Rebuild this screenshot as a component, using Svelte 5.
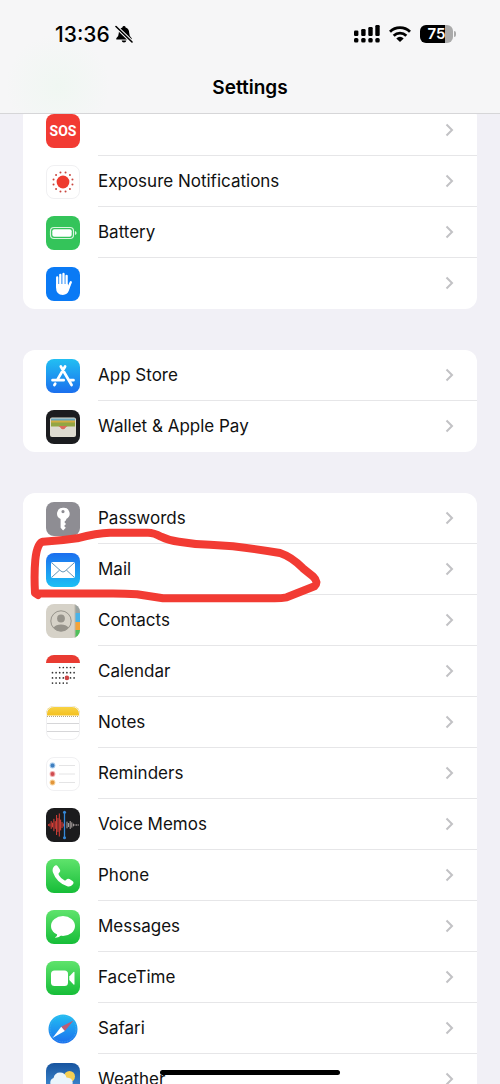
<script lang="ts">
  interface Item {
    icon: string;
    label?: string;
    hint?: string;
    marked?: boolean;
  }

  const groups: Item[][] = [
    [
      { icon: "sos", hint: "SOS" },
      { icon: "exposure", label: "Exposure Notifications" },
      { icon: "battery", label: "Battery" },
      { icon: "hand", hint: "Hand" },
    ],
    [
      { icon: "appstore", label: "App Store" },
      { icon: "wallet", label: "Wallet & Apple Pay" },
    ],
    [
      { icon: "passwords", label: "Passwords" },
      { icon: "mail", label: "Mail", marked: true },
      { icon: "contacts", label: "Contacts" },
      { icon: "calendar", label: "Calendar" },
      { icon: "notes", label: "Notes" },
      { icon: "reminders", label: "Reminders" },
      { icon: "voice", label: "Voice Memos" },
      { icon: "phone", label: "Phone" },
      { icon: "messages", label: "Messages" },
      { icon: "facetime", label: "FaceTime" },
      { icon: "safari", label: "Safari" },
      { icon: "weather", label: "Weather" },
    ],
  ];

  const backgrounds: Record<string, string> = {
    sos: "#f23b33",
    exposure: "#fff",
    battery: "#34c45a",
    hand: "#0a7af5",
    appstore: "url(#sky)",
    wallet: "#1b1c1f",
    passwords: "#8e8d93",
    mail: "url(#mailblue)",
    contacts: "#d6d2c8",
    calendar: "#fff",
    notes: "#fff",
    reminders: "#fff",
    voice: "#1b1b1d",
    phone: "url(#green)",
    messages: "url(#green)",
    facetime: "url(#green)",
    safari: "#fff",
    weather: "url(#weatherblue)",
  };

  const outlined = ["exposure", "notes", "reminders"];

  const rays = Array.from({ length: 12 }, (_, i) => {
    const a = (i * Math.PI) / 6 + Math.PI / 12;
    return { x: 17 + 9.8 * Math.cos(a), y: 17 + 9.8 * Math.sin(a) };
  });

  // [first column, last column] of the days in each week
  const weeks = [[2, 6], [0, 6], [0, 6], [0, 4]];
  const days = weeks.flatMap(([from, to], row) =>
    Array.from({ length: to - from + 1 }, (_, i) => ({ x: 6.5 + (from + i) * 3.6, y: 12.5 + row * 5.2 }))
  );

  const wave = [1, 2, 5, 3, 8, 5, 13, 9, 15, 7, 4, 2];
  const tail = [5, 3, 6, 4, 2, 1, 1, 1];
</script>

<svg class="defs" width="0" height="0" aria-hidden="true">
  <defs>
    <linearGradient id="sky" x2="0" y2="1">
      <stop offset="0" stop-color="#22bff2" />
      <stop offset="1" stop-color="#1b6fee" />
    </linearGradient>
    <linearGradient id="mailblue" x2="0" y2="1">
      <stop offset="0" stop-color="#1c6fef" />
      <stop offset="1" stop-color="#1cc0f4" />
    </linearGradient>
    <linearGradient id="green" x2="0" y2="1">
      <stop offset="0" stop-color="#5fe36c" />
      <stop offset="1" stop-color="#16bd38" />
    </linearGradient>
    <linearGradient id="weatherblue" x2="0" y2="1">
      <stop offset="0" stop-color="#17549f" />
      <stop offset="1" stop-color="#4a9be0" />
    </linearGradient>
    <linearGradient id="yellow" x2="0" y2="1">
      <stop offset="0" stop-color="#f9d548" />
      <stop offset="1" stop-color="#f4c01f" />
    </linearGradient>
    <clipPath id="tile"><rect width="34" height="34" rx="8" /></clipPath>
  </defs>
</svg>

{#snippet appIcon(name: string)}
  <svg class="icon" viewBox="0 0 34 34" aria-hidden="true">
    <g clip-path="url(#tile)">
      <rect width="34" height="34" fill={backgrounds[name]} />
      {#if name === "sos"}
        <text x="17" y="22" text-anchor="middle" class="sos">SOS</text>
      {:else if name === "exposure"}
        <circle cx="17" cy="17" r="6.4" fill="#ee3b2f" />
        {#each rays as ray}
          <circle cx={ray.x} cy={ray.y} r="1" fill="#c9473f" />
        {/each}
      {:else if name === "battery"}
        <rect x="4.5" y="11.5" width="23" height="11" rx="3.5" fill="none" stroke="#d9f5df" stroke-width="1.2" />
        <rect x="6.3" y="13.3" width="19.4" height="7.4" rx="2" fill="#fff" />
        <path d="M29 15v4q1.6-.6 1.6-2t-1.6-2z" fill="#d9f5df" />
      {:else if name === "hand"}
        <g fill="none" stroke="#fff" stroke-width="2.3" stroke-linecap="round">
          <path d="M11.2 10.5v9M14.3 7.800v10M17.5 7v10M20.6 8.800v9M24.800 15.300l-2.500 5.500" />
        </g>
        <path d="M10 17h11.800l.3 2.200 2.500-1-1.700 5.300q-1.600 4.400-6 4.400-6.900 0-6.900-7.600z" fill="#fff" />
      {:else if name === "appstore"}
        <g fill="none" stroke="#fff" stroke-width="2.7" stroke-linecap="round">
          <path d="M14.800 7.500 25.600 26M19.100 7.500 11.300 20.900M9.200 24.700l-.8 1.300M6.500 21.200h11.200M23.500 21.200h4" />
        </g>
      {:else if name === "wallet"}
        <rect x="4" y="7.500" width="26" height="19.500" rx="2" fill="#e0ddd0" />
        <path d="M5 8.500h24v3H5z" fill="#67a6bd" />
        <path d="M5 10.500h24v3H5z" fill="#d3ad42" />
        <path d="M5 12.500h24v4.500H5z" fill="#93a643" />
        <path d="M12 16h10q-1.500 0-2.300 1.800-1 1.800-2.700 1.800t-2.700-1.800Q13.500 16 12 16z" fill="#dc6b5c" />
        <path d="M5 16.500h7.500q1.300 0 2 1.500.9 1.800 2.500 1.800t2.500-1.800q.7-1.500 2-1.500H29V26H5z" fill="#dedbd0" />
      {:else if name === "passwords"}
        <path
          d="M17 5.700a5.900 5.900 0 0 0-2.400 11.300v8.800l2.500 2.700 2.700-2.700-1.700-1.900 1.900-2-1.700-1.800 1.900-2.200v-1A5.900 5.900 0 0 0 17 5.700zm0 2.300a1.600 1.600 0 1 1 0 3.200 1.600 1.600 0 0 1 0-3.200z"
          fill="#fff"
          fill-rule="evenodd"
        />
      {:else if name === "mail"}
        <rect x="5" y="9" width="24" height="16" rx="2" fill="#fff" />
        <path d="m6 10 9 8.200q2 1.600 4 0l9-8.200M6 24l7.700-7M28 24l-7.700-7" fill="none" stroke="#6496b7" />
      {:else if name === "contacts"}
        <path d="M29 0h5v9h-5z" fill="#9aa2a0" />
        <path d="M29 9h5v9h-5z" fill="#49b3e9" />
        <path d="M29 18h5v8h-5z" fill="#f3a43b" />
        <path d="M29 26h5v8h-5z" fill="#4fc05a" />
        <path d="M28.500 0h1v34h-1z" fill="#bbb6aa" />
        <circle cx="15" cy="17" r="10.200" fill="none" stroke="#96938b" />
        <circle cx="15" cy="14.500" r="3.900" fill="#96938b" />
        <path d="M7.500 23.500q2.500-3 7.500-3t7.500 3q-2.500 3.700-7.500 3.700t-7.500-3.700z" fill="#96938b" />
      {:else if name === "calendar"}
        <path d="M0 0h34v8H0z" fill="#e93b32" />
        {#each days as day}
          <circle cx={day.x} cy={day.y} r="0.85" fill="#333" />
        {/each}
        <circle cx="20.900" cy="22.900" r="2.300" fill="#cf4546" />
      {:else if name === "notes"}
        <path d="M0 0h34v9.500H0z" fill="url(#yellow)" />
        <path d="M1 10.500h32" stroke="#b5a984" stroke-dasharray="1 1" />
        <path d="M0 17.500h34M0 25.500h34" stroke="#d6d6d8" />
      {:else if name === "reminders"}
        <circle cx="6.500" cy="8.500" r="2.900" fill="#a9cbea" />
        <circle cx="6.500" cy="17" r="2.900" fill="#f0adad" />
        <circle cx="6.500" cy="25.500" r="2.900" fill="#f6d29b" />
        <circle cx="6.500" cy="8.500" r="1.900" fill="#3f7fc0" />
        <circle cx="6.500" cy="17" r="1.900" fill="#cf4c50" />
        <circle cx="6.500" cy="25.500" r="1.900" fill="#e2953a" />
        <path d="M13 8.500h16M13 17h16M13 25.500h16" stroke="#e4e4e5" />
      {:else if name === "voice"}
        {#each wave as h, i}
          <path d="M{2.5 + i * 1.35} {17 - h / 1.3}v{h * 1.54}" stroke="#df4039" />
        {/each}
        {#each tail as h, i}
          <path d="M{21 + i * 1.6} {17 - h / 1.5}v{h * 1.33}" stroke="#b3aaa9" />
        {/each}
        <path d="M18.500 4v26" stroke="#3488d8" stroke-width="1.3" />
        <circle cx="18.500" cy="4.300" r="1.500" fill="#3488d8" />
        <circle cx="18.500" cy="29.700" r="1.500" fill="#3488d8" />
      {:else if name === "phone"}
        <path
          d="M8.200 7.200q2.100-1.900 3.700.3l2 3q1 1.700-.5 3-1.400 1-.6 2.400 2.200 3.700 5.500 5.400 1.300.6 2.200-.7 1.200-1.600 3-.5l3 2q2 1.500.2 3.500-2.200 2.500-5.500 1.600-10.700-3.500-14.400-14.200-.8-3.700 1.400-5.800z"
          fill="#fff"
        />
      {:else if name === "messages"}
        <ellipse cx="17" cy="16" rx="12" ry="10" fill="#fff" />
        <path d="M11.500 23q0 3-2.500 4.600 4 .3 6.500-2.600z" fill="#fff" />
      {:else if name === "facetime"}
        <rect x="5" y="9.500" width="17" height="15.500" rx="3.500" fill="#fff" />
        <path d="M23.300 15.500 27.500 11q1-.6 1 .5v11.500q0 1-1 .4l-4.200-4.400z" fill="#fff" />
      {:else if name === "safari"}
        <circle cx="17" cy="17" r="14.500" fill="url(#sky)" />
        <circle cx="17" cy="17" r="13" fill="none" stroke="#5fb8ee" stroke-width="0.8" stroke-dasharray="0.7 1" />
        <path d="m27.500 8.500-12.300 6.300 3.600 4.200z" fill="#bd5c75" />
        <path d="m6.500 26 8.700-11.200 3.600 4.200z" fill="#fff" />
      {:else if name === "weather"}
        <circle cx="23.500" cy="13.500" r="5.500" fill="#f5cf54" />
        <path d="M8 24.500a5 5 0 0 1-.5-9.500q1.300-5.500 6.500-5.500 5 0 6.500 5 6 .2 6.200 5 0 5-5.200 5z" fill="#eaf5fc" />
      {/if}
    </g>
    {#if outlined.includes(name)}
      <rect x="0.500" y="0.500" width="33" height="33" rx="7.500" fill="none" stroke="#f0f0f2" />
    {/if}
  </svg>
{/snippet}

<div class="screen">
  <header>
    <div class="status">
      <div class="clock">
        <time>13:36</time>
        <svg width="18" height="18" viewBox="0 0 18 18" aria-hidden="true">
          <path d="M9 1q1.500 0 1.600 1.400 3.600 1 3.600 5.600 0 3.300 2.500 5.200v1.200H1.300v-1.200Q3.800 11.300 3.800 8q0-4.600 3.600-5.600Q7.500 1 9 1zM6.600 15.400h4.800Q11 17.400 9 17.400t-2.400-2z" />
          <path d="M1 1.500 17 17" stroke="#f6f6f7" stroke-width="3.600" />
          <path d="M1 1.500 17 17" stroke="#000" stroke-width="1.600" stroke-linecap="round" />
        </svg>
      </div>
      <div class="indicators">
        <svg width="26" height="18" viewBox="0 0 26 18" aria-hidden="true">
          <rect y="5.500" width="4.400" height="5.500" rx="1.200" />
          <rect x="7.200" y="4" width="4.400" height="7" rx="1.200" />
          <rect x="14.300" y="2" width="4.400" height="9" rx="1.200" />
          <rect x="21.300" width="4.400" height="11" rx="1.200" />
          <rect y="13" width="4.400" height="4.400" rx="1.500" />
          <rect x="7.200" y="13" width="4.400" height="4.400" rx="1.500" />
          <rect x="14.300" y="13" width="4.400" height="4.400" rx="1.500" />
          <rect x="21.300" y="13" width="4.400" height="4.400" rx="1.500" />
        </svg>
        <svg width="22" height="16" viewBox="0 0 22 16" aria-hidden="true">
          <g fill="none" stroke="#000" stroke-width="2.8">
            <path d="M1 5.800a14.300 14.300 0 0 1 20 0" />
            <path d="M4.700 9.700a9 9 0 0 1 12.600 0" />
          </g>
          <path d="M7.300 12.400a5.200 5.200 0 0 1 7.400 0L11 16z" />
        </svg>
        <div class="level">
          <span>75</span>
        </div>
      </div>
    </div>
    <h1>Settings</h1>
  </header>

  <main>
    {#each groups as group}
      <ul>
        {#each group as item}
          <li>
            <a href="#{item.icon}" aria-label={item.label ?? item.hint}>
              {@render appIcon(item.icon)}
              <span class="body">
                <span>{item.label ?? ""}</span>
                <svg width="9" height="14" viewBox="0 0 9 14" aria-hidden="true">
                  <path d="m1.500 1.500 5.500 5.500-5.500 5.500" fill="none" stroke="#c2c2c5" stroke-width="2" />
                </svg>
              </span>
            </a>
            {#if item.marked}
              <svg class="marker" width="310" height="84" viewBox="0 0 310 84" aria-hidden="true">
                <path
                  d="M15 71 12 69Q11 50 12.300 36 14 19 20 17.700 36 17 54 14.300 74 9 87 8.700h38q6 0 13 4 8 4 18 5 16 2.800 31 3l23 1.600q26 3 47 6.700 12 4 23 15.300l10 8q6 6 1.500 10l-27.800 11q-5 1-12 1H140l-26-4q-12-.7-24-.7H15"
                />
              </svg>
            {/if}
          </li>
        {/each}
      </ul>
    {/each}
  </main>

  <div class="home"></div>
</div>

<style>
  :global(body) {
    margin: 0;
    background: #f1f0f6;
  }

  .defs {
    position: absolute;
  }

  .screen {
    position: relative;
    height: 100vh;
    overflow: hidden;
    background: #f1f0f6;
    color: #111;
    font-family: Inter, "Liberation Sans", sans-serif;
  }

  header {
    position: absolute;
    top: 0;
    left: 0;
    right: 0;
    z-index: 2;
    box-sizing: border-box;
    height: 114px;
    padding-top: 20px;
    border-bottom: 1px solid #d6d6d8;
    background: radial-gradient(circle at 58px 86px, #f0f7f2, #f6f6f7 52px);
    color: #000;
  }

  .status {
    display: flex;
    align-items: center;
    justify-content: space-between;
    height: 28px;
    padding: 0 47px 0 55px;
  }

  .clock {
    display: flex;
    align-items: center;
    gap: 5px;
    font-size: 21px;
    font-weight: 500;
  }

  .indicators {
    display: flex;
    align-items: center;
    gap: 9px;
  }

  .level {
    position: relative;
    width: 33px;
    height: 18px;
    border-radius: 6px;
    background: linear-gradient(90deg, #000 75%, #aaa 75%);
    color: #fff;
    font-size: 15px;
    font-weight: 600;
    line-height: 18px;
    text-align: center;
  }

  .level::after {
    content: "";
    position: absolute;
    top: 6px;
    right: -3px;
    width: 2px;
    height: 6px;
    border-radius: 0 2px 2px 0;
    background: #aaa;
  }

  h1 {
    margin: 28px 0 0;
    font-size: 19px;
    font-weight: 600;
    line-height: 24px;
    text-align: center;
  }

  main {
    display: flex;
    flex-direction: column;
    gap: 41px;
    padding: 105px 23px 0;
  }

  ul {
    margin: 0;
    padding: 0;
    border-radius: 12px;
    background: #fff;
    list-style: none;
  }

  li {
    position: relative;
  }

  a {
    display: flex;
    align-items: center;
    gap: 18px;
    height: 51px;
    padding-left: 23px;
    color: inherit;
    font-size: 17px;
    text-decoration: none;
  }

  .icon {
    flex: none;
    width: 34px;
    height: 34px;
  }

  .sos {
    fill: #fff;
    font-family: "Liberation Sans Narrow", Roboto, sans-serif;
    font-size: 14px;
    font-weight: 700;
  }

  .body {
    display: flex;
    flex: 1;
    align-items: center;
    justify-content: space-between;
    box-sizing: border-box;
    height: 51px;
    padding-right: 23px;
    border-bottom: 1px solid #e6e6e8;
  }

  li:last-child .body {
    border-bottom-color: transparent;
  }

  .marker {
    position: absolute;
    top: -20px;
    left: 0;
    z-index: 1;
    fill: none;
    stroke: #f23b33;
    stroke-width: 8;
    stroke-linecap: round;
    stroke-linejoin: round;
    pointer-events: none;
  }

  .home {
    position: absolute;
    bottom: 9px;
    left: 50%;
    z-index: 2;
    width: 36%;
    height: 5px;
    border-radius: 3px;
    background: #000;
    transform: translateX(-50%);
  }
</style>
